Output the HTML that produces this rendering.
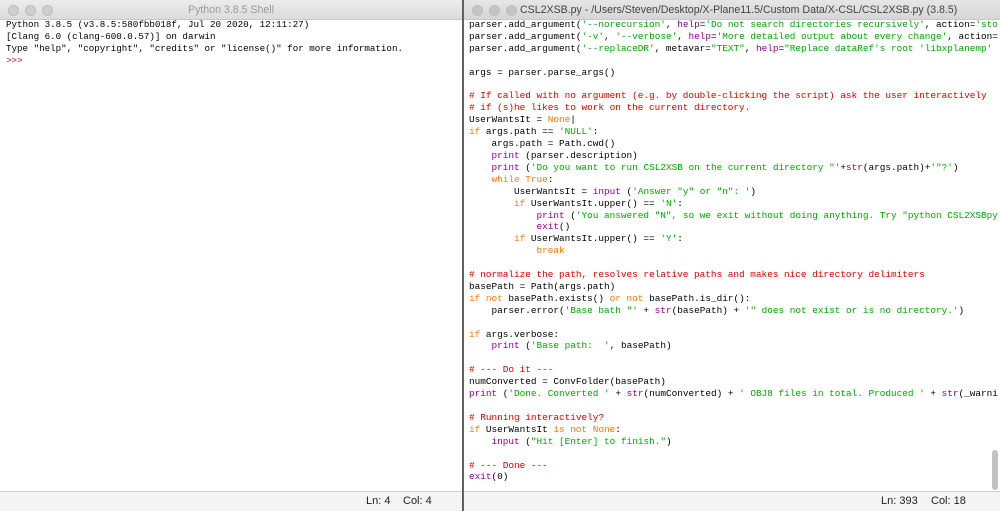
<!DOCTYPE html>
<html><head><meta charset="utf-8"><style>
*{margin:0;padding:0;box-sizing:border-box}
body{width:1000px;height:511px;overflow:hidden;background:#5a5a5a;position:relative;font-family:"Liberation Sans",sans-serif}
.win{position:absolute;top:0;height:511px;background:#fff;overflow:hidden}
.tb{position:absolute;left:0;right:0;top:0;height:20px;background:linear-gradient(#ececec,#dcdcdc);border-bottom:1px solid #c8c8c8;font-size:10.6px;line-height:20px;color:#555;white-space:nowrap}
.dot{position:absolute;top:5px;width:11px;height:11px;border-radius:50%;background:#cfcfcf;border:1px solid #bdbdbd}
pre{position:absolute;font-family:"Liberation Mono",monospace;font-size:9.2px;line-height:11.9px;color:#000;white-space:pre}
.k{color:#ff7700}.s{color:#00aa00}.c{color:#dd0000}.b{color:#900090}
.sb{position:absolute;left:0;right:0;bottom:0;height:20px;border-top:1px solid #cfcfcf;background:#f4f4f4;font-size:11px;color:#222;line-height:19px}
</style></head><body>
<div class="win" style="left:0;width:462px">
 <div class="tb"><div class="dot" style="left:8px"></div><div class="dot" style="left:25px"></div><div class="dot" style="left:42px"></div><div style="text-align:center;color:#9a9a9a">Python 3.8.5 Shell</div></div>
<pre style="left:6px;top:19px">Python 3.8.5 (v3.8.5:580fbb018f, Jul 20 2020, 12:11:27)
[Clang 6.0 (clang-600.0.57)] on darwin
Type "help", "copyright", "credits" or "license()" for more information.
<span class="c">&gt;&gt;&gt;</span> </pre>
 <div class="sb"><span style="position:absolute;left:366px">Ln: 4</span><span style="position:absolute;left:403px">Col: 4</span></div>
</div>
<div class="win" style="left:463px;width:537px;border-left:1px solid #666">
 <div class="tb" style="background:linear-gradient(#e6e6e6,#d6d6d6)"><div class="dot" style="left:8px;background:#c4c4c4"></div><div class="dot" style="left:25px;background:#c4c4c4"></div><div class="dot" style="left:42px;background:#c4c4c4"></div><div style="position:absolute;left:56px;color:#444;font-size:10.6px">CSL2XSB.py - /Users/Steven/Desktop/X-Plane11.5/Custom Data/X-CSL/CSL2XSB.py (3.8.5)</div></div>
 <div style="position:absolute;left:0;top:20px;width:534px;height:470px;overflow:hidden">
<pre style="left:5px;top:-1px;font-size:9.4px">parser.add_argument(<span class="s">'--norecursion'</span>, <span class="b">help</span>=<span class="s">'Do not search directories recursively'</span>, action=<span class="s">'store_true'</span>)
parser.add_argument(<span class="s">'-v'</span>, <span class="s">'--verbose'</span>, <span class="b">help</span>=<span class="s">'More detailed output about every change'</span>, action=<span class="s">'store_true'</span>)
parser.add_argument(<span class="s">'--replaceDR'</span>, metavar=<span class="s">"TEXT"</span>, <span class="b">help</span>=<span class="s">"Replace dataRef's root 'libxplanemp' with TEXT"</span>)

args = parser.parse_args()

<span class="c"># If called with no argument (e.g. by double-clicking the script) ask the user interactively</span>
<span class="c"># if (s)he likes to work on the current directory.</span>
UserWantsIt = <span class="k">None</span>|
<span class="k">if</span> args.path == <span class="s">'NULL'</span>:
    args.path = Path.cwd()
    <span class="b">print</span> (parser.description)
    <span class="b">print</span> (<span class="s">'Do you want to run CSL2XSB on the current directory "'</span>+<span class="b">str</span>(args.path)+<span class="s">'"?'</span>)
    <span class="k">while</span> <span class="k">True</span>:
        UserWantsIt = <span class="b">input</span> (<span class="s">'Answer "y" or "n": '</span>)
        <span class="k">if</span> UserWantsIt.upper() == <span class="s">'N'</span>:
            <span class="b">print</span> (<span class="s">'You answered "N", so we exit without doing anything. Try "python CSL2XSBpy -h"'</span>)
            <span class="b">exit</span>()
        <span class="k">if</span> UserWantsIt.upper() == <span class="s">'Y'</span>:
            <span class="k">break</span>

<span class="c"># normalize the path, resolves relative paths and makes nice directory delimiters</span>
basePath = Path(args.path)
<span class="k">if not</span> basePath.exists() <span class="k">or not</span> basePath.is_dir():
    parser.error(<span class="s">'Base bath "'</span> + <span class="b">str</span>(basePath) + <span class="s">'" does not exist or is no directory.'</span>)

<span class="k">if</span> args.verbose:
    <span class="b">print</span> (<span class="s">'Base path:  '</span>, basePath)

<span class="c"># --- Do it ---</span>
numConverted = ConvFolder(basePath)
<span class="b">print</span> (<span class="s">'Done. Converted '</span> + <span class="b">str</span>(numConverted) + <span class="s">' OBJ8 files in total. Produced '</span> + <span class="b">str</span>(_warnings))

<span class="c"># Running interactively?</span>
<span class="k">if</span> UserWantsIt <span class="k">is not None</span>:
    <span class="b">input</span> (<span class="s">"Hit [Enter] to finish."</span>)

<span class="c"># --- Done ---</span>
<span class="b">exit</span>(0)</pre>
 </div>
 <div style="position:absolute;left:526px;top:20px;width:10px;height:470px;background:transparent"><div style="position:absolute;left:2px;top:430px;width:6px;height:40px;border-radius:3px;background:#c2c2c2"></div></div>
 <div class="sb"><span style="position:absolute;left:417px">Ln: 393</span><span style="position:absolute;left:467px">Col: 18</span></div>
</div>
</body></html>
